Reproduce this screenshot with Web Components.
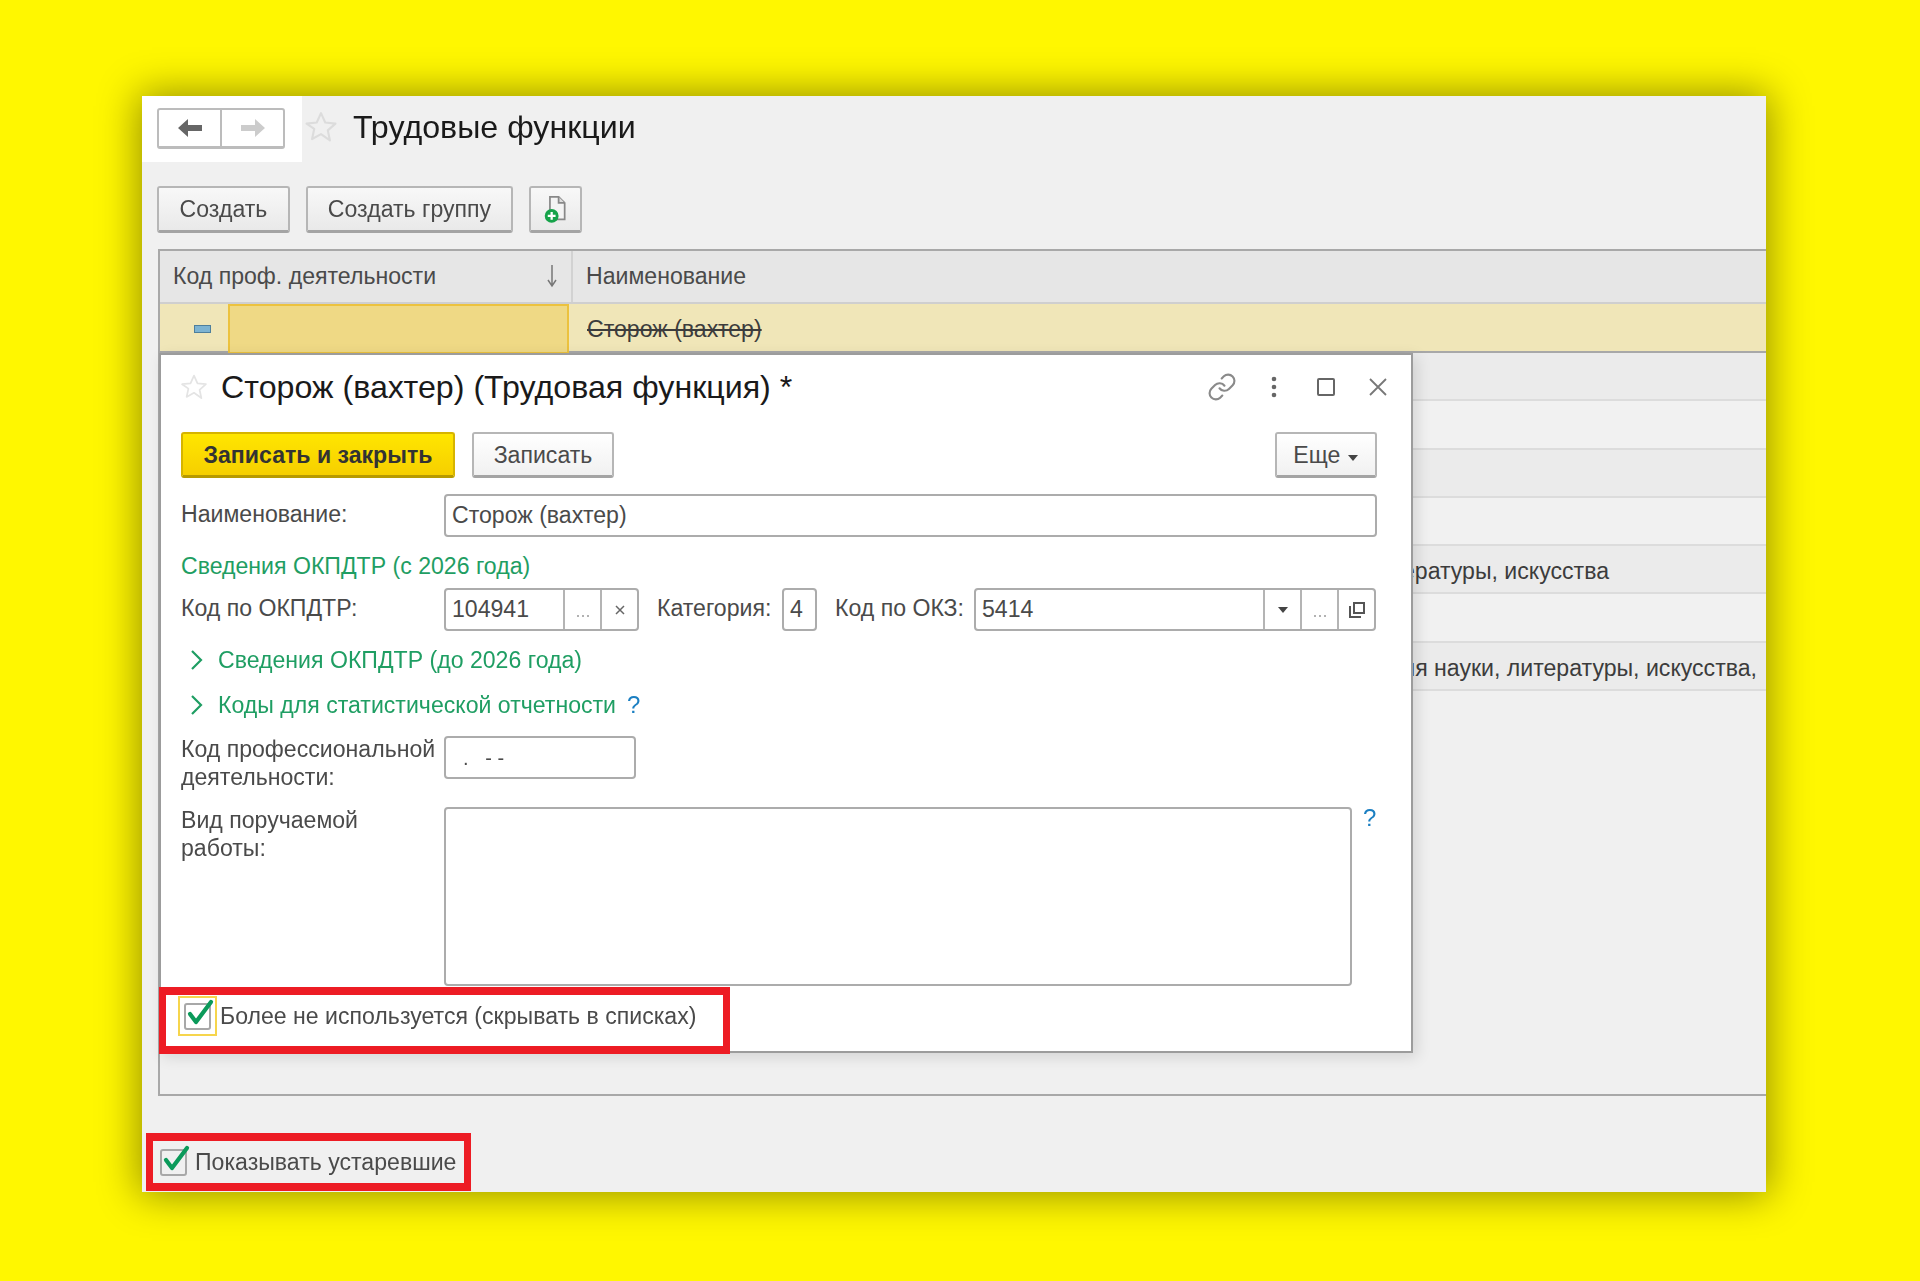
<!DOCTYPE html>
<html lang="ru">
<head>
<meta charset="utf-8">
<title>Трудовые функции</title>
<style>
    html, body { margin: 0; height: 1281px; overflow: hidden; }
    body {
        background: #fff700;
        padding: 96px 0 0 142px;
        box-sizing: border-box;
        font: 23.1px/26px "Liberation Sans", Arial, sans-serif;
        color: #4a4a4a;
    }
</style>
</head>
<body>
<hr-window>
    <hr-page-head slot="head">Трудовые функции</hr-page-head>
    <div slot="toolbar" style="display:flex;gap:16px">
        <hr-button style="width:133px">Создать</hr-button>
        <hr-button style="width:207px">Создать группу</hr-button>
        <hr-button style="width:53px" icon="doc"></hr-button>
    </div>
    <hr-table slot="table">
        <hr-grid-row>&nbsp;</hr-grid-row>
        <hr-grid-row light>&nbsp;</hr-grid-row>
        <hr-grid-row>&nbsp;</hr-grid-row>
        <hr-grid-row light>&nbsp;</hr-grid-row>
        <hr-grid-row end="157">Деятели науки, литературы, искусства</hr-grid-row>
        <hr-grid-row light>&nbsp;</hr-grid-row>
        <hr-grid-row end="9">Работники в сфере образования науки, литературы, искусства,</hr-grid-row>
    </hr-table>
    <hr-dialog slot="dialog" heading="Сторож (вахтер) (Трудовая функция) *">
        <hr-form></hr-form>
    </hr-dialog>
    <hr-check slot="footer" style="--box-gap:8px">Показывать устаревшие</hr-check>
</hr-window>

<script>
const STAR = (size, stroke) => `<svg width="${size}" height="${size}" viewBox="0 0 24 24" fill="none" stroke="${stroke}" stroke-width="1.5" stroke-linejoin="round"><path d="M12 2.2l3 6.6 7.2.8-5.4 4.8 1.5 7.1L12 17l-6.3 3.5 1.5-7.1L1.8 9.6 9 8.800z"/></svg>`;

const CHECK = `<svg width="34" height="34" viewBox="0 0 34 34" fill="none" stroke="#0b9a5a" stroke-width="4.200" stroke-linecap="round" stroke-linejoin="round"><path d="M6 17l6 8L27 5"/></svg>`;

class HrWindow extends HTMLElement {
    constructor() {
        super();
        this.attachShadow({ mode: 'open' });
        this.shadowRoot.innerHTML = `
            <style>
                :host {
                    display: flex;
                    flex-direction: column;
                    position: relative;
                    width: 1624px;
                    height: 1096px;
                    background: #f0f0f0;
                    box-shadow: 0 0 38px 3px rgba(0, 0, 0, 0.42);
                    filter: blur(0.45px);
                }
                .toolbar { margin: 24px 0 16px 15px; display: block; }
                .footer { margin: 37px 0 0 4px; display: block; }
            </style>
            <slot name="head"></slot>
            <div class="toolbar"><slot name="toolbar"></slot></div>
            <slot name="table"></slot>
            <div class="footer"><hr-mark><slot name="footer"></slot></hr-mark></div>
            <slot name="dialog"></slot>
        `;
    }
}

class HrPageHead extends HTMLElement {
    constructor() {
        super();
        this.attachShadow({ mode: 'open' });
        this.shadowRoot.innerHTML = `
            <style>
                :host { display: flex; align-items: flex-start; height: 66px; }
                .nav {
                    width: 160px;
                    height: 66px;
                    box-sizing: border-box;
                    padding: 12px 0 0 15px;
                    background: #fff;
                }
                .pair {
                    display: flex;
                    width: 128px;
                    height: 41px;
                    box-sizing: border-box;
                    border: 2px solid #bcbcbc;
                    border-bottom-width: 3px;
                    border-radius: 3px;
                }
                .pair div { flex: 1; display: flex; align-items: center; justify-content: center; }
                .pair div:first-child { border-right: 2px solid #bcbcbc; }
                .star { margin: 14px 0 0 2px; line-height: 0; }
                .title { margin: 12px 0 0 15px; font-size: 32.2px; line-height: 38px; color: #1a1a1a; }
            </style>
            <div class="nav">
                <div class="pair">
                    <div><svg width="26" height="20" viewBox="0 0 26 20" fill="#666"><path d="M1 10l10-9v6h14v6H11v6z"/></svg></div>
                    <div><svg width="26" height="20" viewBox="0 0 26 20" fill="#ccc"><path d="M25 10L15 1v6H1v6h14v6z"/></svg></div>
                </div>
            </div>
            <div class="star">${STAR(34, '#dcdcdc')}</div>
            <div class="title"><slot></slot></div>
        `;
    }
}

class HrButton extends HTMLElement {
    constructor() {
        super();
        this.attachShadow({ mode: 'open' });
        const icon = this.getAttribute('icon') === 'doc' ? `
            <svg width="26" height="30" viewBox="0 0 30 34">
                <path d="M8 3h10l7 7v19H8z" fill="#f4f4f4" stroke="#888" stroke-width="2"/>
                <path d="M18 3v7h7" fill="#ddd" stroke="#888" stroke-width="2"/>
                <circle cx="10" cy="25" r="8" fill="#16a34a"/>
                <path d="M10 20.500v9M5.500 25h9" stroke="#fff" stroke-width="2.600"/>
            </svg>` : '';
        this.shadowRoot.innerHTML = `
            <style>
                :host {
                    display: flex;
                    align-items: center;
                    justify-content: center;
                    height: 47px;
                    box-sizing: border-box;
                    border: 2px solid #b6b6b6;
                    border-bottom: 3px solid #a4a4a4;
                    border-radius: 3px;
                    background: linear-gradient(#f8f8f8, #e9e9e9);
                    color: #4a4a4a;
                }
                :host([primary]) {
                    background: linear-gradient(#ffe600, #f6cf00);
                    border-color: #d6b400;
                    border-bottom-color: #b79a00;
                    color: #333;
                    font-weight: bold;
                }
                :host([plain]) { background: linear-gradient(#ffffff, #f1f1f1); }
            </style>
            ${icon}<slot></slot>
        `;
    }
}

class HrTable extends HTMLElement {
    constructor() {
        super();
        this.attachShadow({ mode: 'open' });
        this.shadowRoot.innerHTML = `
            <style>
                :host {
                    display: block;
                    height: 847px;
                    margin-left: 16px;
                    box-sizing: border-box;
                    border: 2px solid #a8a8a8;
                    border-right: 0;
                    overflow: hidden;
                }
                .head {
                    display: grid;
                    grid-template-columns: 413px 1fr;
                    height: 53px;
                    background: #e6e6e6;
                    border-bottom: 2px solid #cfcfcf;
                    box-sizing: border-box;
                }
                .head div { display: flex; align-items: center; padding: 0 13px 2px; }
                .head div:first-child { justify-content: space-between; border-right: 2px solid #d2d2d2; padding: 0 12px 2px 13px; }
                .sel {
                    display: grid;
                    grid-template-columns: 68px 341px 1fr;
                    height: 49px;
                    background: #f0e6b8;
                    border-bottom: 2px solid #a8a8a8;
                    box-sizing: border-box;
                }
                .mark { display: flex; align-items: center; justify-content: flex-end; padding: 0 17px 0 0; }
                .mark i { display: block; width: 17px; height: 8px; box-sizing: border-box; background: #7db3d1; border: 1px solid #4e7f9c; }
                .cell { background: #efd985; border: 2px solid #ecc23e; box-sizing: border-box; }
                .text { padding: 0 0 0 18px; line-height: 50px; text-decoration: line-through; color: #3c3c3c; }
            </style>
            <div class="head">
                <div>Код проф. деятельности
                    <svg width="14" height="24" viewBox="0 0 14 24" fill="none" stroke="#777" stroke-width="1.500"><path d="M7 1v20M3 16l4 6 4-6"/></svg>
                </div>
                <div>Наименование</div>
            </div>
            <div class="sel">
                <div class="mark"><i></i></div>
                <div class="cell"></div>
                <div class="text">Сторож (вахтер)</div>
            </div>
            <slot></slot>
        `;
    }
}

class HrGridRow extends HTMLElement {
    constructor() {
        super();
        this.attachShadow({ mode: 'open' });
        const end = this.getAttribute('end') || 0;
        this.shadowRoot.innerHTML = `
            <style>
                :host {
                    display: block;
                    height: 48.3px;
                    box-sizing: border-box;
                    background: #ebebeb;
                    border-bottom: 2px solid #dcdcdc;
                    line-height: 50px;
                    white-space: nowrap;
                    text-align: right;
                    padding-right: ${end}px;
                    color: #3c3c3c;
                }
                :host([light]) { background: #f1f1f1; }
            </style>
            <slot></slot>
        `;
    }
}

class HrDialog extends HTMLElement {
    constructor() {
        super();
        this.attachShadow({ mode: 'open' });
        this.shadowRoot.innerHTML = `
            <style>
                :host {
                    position: absolute;
                    left: 17px;
                    top: 257px;
                    width: 1254px;
                    height: 700px;
                    box-sizing: border-box;
                    padding: 0 33px 0 20px;
                    background: #fff;
                    border: 2px solid #9c9c9c;
                    box-shadow: 4px 4px 14px rgba(0, 0, 0, 0.12);
                }
                .head { display: flex; align-items: center; height: 77px; box-sizing: border-box; padding-bottom: 14px; }
                .star { margin: 0 13px 0 -1px; line-height: 0; }
                h1 { margin: 0; flex: 1; font-size: 32.2px; line-height: 38px; font-weight: normal; color: #1a1a1a; }
                .icons { display: flex; align-items: center; margin: 0 -26px 0 0; }
                .icons span { display: flex; width: 52px; justify-content: center; }
            </style>
            <div class="head">
                <div class="star">${STAR(28, '#e4e4e4')}</div>
                <h1>${this.getAttribute('heading')}</h1>
                <div class="icons">
                    <span><svg width="30" height="30" viewBox="0 0 24 24" fill="none" stroke="#8a8a8a" stroke-width="1.700" stroke-linecap="round"><path d="M10 13a5 5 0 0 0 7.540.54l3-3a5 5 0 0 0-7.070-7.070l-1.720 1.710"/><path d="M14 11a5 5 0 0 0-7.540-.54l-3 3a5 5 0 0 0 7.070 7.070l1.710-1.710"/></svg></span>
                    <span><svg width="8" height="24" viewBox="0 0 8 24" fill="#666"><circle cx="4" cy="4" r="2.300"/><circle cx="4" cy="12" r="2.300"/><circle cx="4" cy="20" r="2.300"/></svg></span>
                    <span><svg width="20" height="20" viewBox="0 0 20 20" fill="none" stroke="#666" stroke-width="2"><rect x="2" y="2" width="16" height="16" rx="1"/></svg></span>
                    <span><svg width="20" height="20" viewBox="0 0 20 20" fill="none" stroke="#777" stroke-width="1.800"><path d="M2 2l16 16M18 2L2 18"/></svg></span>
                </div>
            </div>
            <slot></slot>
        `;
    }
}

class HrField extends HTMLElement {
    constructor() {
        super();
        this.attachShadow({ mode: 'open' });
        this.shadowRoot.innerHTML = `
            <style>
                :host {
                    display: flex;
                    height: 43px;
                    box-sizing: border-box;
                    border: 2px solid #acacac;
                    border-radius: 4px;
                    background: #fff;
                    overflow: hidden;
                    flex: none;
                }
                .value { flex: 1; padding: 0 5px 0 6px; line-height: 39px; white-space: pre; color: #4a4a4a; min-width: 0; }
                .btns { display: flex; }
            </style>
            <div class="value"><slot></slot></div>
            <div class="btns"><slot name="btn"></slot></div>
        `;
    }
}

class HrFieldBtn extends HTMLElement {
    constructor() {
        super();
        this.attachShadow({ mode: 'open' });
        const kinds = {
            more: '<svg width="16" height="20" viewBox="0 0 16 20" fill="#999"><circle cx="3" cy="16" r="1"/><circle cx="8" cy="16" r="1"/><circle cx="13" cy="16" r="1"/></svg>',
            clear: '<svg width="12" height="12" viewBox="0 0 12 12" fill="none" stroke="#666" stroke-width="1.500"><path d="M2 2l8 8M10 2l-8 8"/></svg>',
            down: '<svg width="12" height="8" viewBox="0 0 12 8" fill="#444"><path d="M1 1h10L6 7z"/></svg>',
            open: '<svg width="18" height="18" viewBox="0 0 18 18" fill="none" stroke="#555" stroke-width="2"><rect x="6" y="2" width="10" height="10"/><path d="M3 6H2v10h10v-1"/></svg>'
        };
        this.shadowRoot.innerHTML = `
            <style>
                :host {
                    display: flex;
                    align-items: center;
                    justify-content: center;
                    width: 35px;
                    border-left: 2px solid #b4b4b4;
                    box-sizing: content-box;
                }
            </style>
            ${kinds[this.getAttribute('kind')]}
        `;
    }
}

class HrMark extends HTMLElement {
    constructor() {
        super();
        this.attachShadow({ mode: 'open' });
        this.shadowRoot.innerHTML = `
            <style>
                :host {
                    display: inline-flex;
                    align-items: center;
                    box-sizing: border-box;
                    height: 58px;
                    padding: 0 8px 0 7px;
                    border: 8px solid #ed1c24;
                    border-width: 8px 7px;
                }
            </style>
            <slot></slot>
        `;
    }
}

class HrCheck extends HTMLElement {
    constructor() {
        super();
        this.attachShadow({ mode: 'open' });
        this.shadowRoot.innerHTML = `
            <style>
                :host { display: inline-flex; align-items: center; white-space: nowrap; }
                .focus { display: flex; align-items: center; justify-content: center; flex: none; }
                :host([focus]) .focus { width: 39px; height: 40px; box-sizing: border-box; border: 2px solid #f6d54c; }
                .box {
                    position: relative;
                    width: 27px;
                    height: 27px;
                    box-sizing: border-box;
                    border: 2px solid #a8a8a8;
                    border-radius: 3px;
                }
                :host([focus]) .box { margin-top: 2px; }
                svg { position: absolute; left: -2px; top: -8px; }
                .text { margin-left: var(--box-gap, 4px); }
            </style>
            <div class="focus"><div class="box">${CHECK}</div></div>
            <div class="text"><slot></slot></div>
        `;
    }
}

class HrForm extends HTMLElement {
    constructor() {
        super();
        this.attachShadow({ mode: 'open' });
        this.shadowRoot.innerHTML = `
            <style>
                :host { display: block; }
                .row { display: flex; align-items: flex-start; }
                .label { flex: none; width: 263px; }
                .green { color: #1f9e63; }
                .help { color: #1b7fc2; font-size: 24px; }
                .center { align-items: center; }
                .toolbar { height: 46px; justify-content: space-between; }
                .toolbar div { display: flex; gap: 17px; }
                .chev { margin-right: 15px; margin-left: 9px; line-height: 0; }
                hr-button { height: 46px; }
            </style>
            <div class="row toolbar">
                <div>
                    <hr-button primary style="width:274px">Записать и закрыть</hr-button>
                    <hr-button plain style="width:142px">Записать</hr-button>
                </div>
                <hr-button plain style="width:102px;margin-right:1px">Еще&nbsp;
                    <svg width="12" height="8" viewBox="0 0 12 8" fill="#444" style="margin-top:6px"><path d="M1 1h10L6 7z"/></svg>
                </hr-button>
            </div>

            <div class="row center" style="margin-top:16px">
                <div class="label" style="margin-top:-4px">Наименование:</div>
                <hr-field style="width:933px">Сторож (вахтер)</hr-field>
            </div>

            <div class="green" style="margin-top:16px">Сведения ОКПДТР (с 2026 года)</div>

            <div class="row center" style="margin-top:9px">
                <div class="label" style="margin-top:-4px">Код по ОКПДТР:</div>
                <hr-field style="width:195px">104941<hr-field-btn slot="btn" kind="more"></hr-field-btn><hr-field-btn slot="btn" kind="clear"></hr-field-btn></hr-field>
                <div style="margin:-4px 0 0 18px;width:125px">Категория:</div>
                <hr-field style="width:35px">4</hr-field>
                <div style="margin:-4px 0 0 18px;width:140px">Код по ОКЗ:</div>
                <hr-field style="width:402px;margin-left:-1px">5414<hr-field-btn slot="btn" kind="down"></hr-field-btn><hr-field-btn slot="btn" kind="more"></hr-field-btn><hr-field-btn slot="btn" kind="open"></hr-field-btn></hr-field>
            </div>

            <div class="row center green" style="margin-top:16px">
                <span class="chev"><svg width="13" height="22" viewBox="0 0 13 22" fill="none" stroke="#1f9e63" stroke-width="2.200"><path d="M2 2l9 9-9 9"/></svg></span>
                Сведения ОКПДТР (до 2026 года)
            </div>

            <div class="row center green" style="margin-top:19px">
                <span class="chev"><svg width="13" height="22" viewBox="0 0 13 22" fill="none" stroke="#1f9e63" stroke-width="2.200"><path d="M2 2l9 9-9 9"/></svg></span>
                Коды для статистической отчетности
                <span class="help" style="margin-left:11px">?</span>
            </div>

            <div class="row" style="margin-top:18px">
                <div class="label" style="margin-top:-1px;line-height:28px">Код профессиональной деятельности:</div>
                <hr-field style="width:192px"><span style="font-size:20px">  .   - -</span></hr-field>
            </div>

            <div class="row" style="margin-top:16px">
                <div class="label" style="margin-top:-1px;line-height:28px">Вид поручаемой<br>работы:</div>
                <hr-field style="width:908px;height:179px"></hr-field>
                <span class="help" style="margin:-2px 0 0 11px">?</span>
            </div>

            <div style="margin:1px 0 0 -22px;line-height:0">
                <hr-mark style="width:571px;height:67px;padding:0 0 10px 12px"><hr-check focus style="--box-gap:3px;line-height:26px">Более не используется (скрывать в списках)</hr-check></hr-mark>
            </div>
        `;
    }
}

customElements.define('hr-window', HrWindow);
customElements.define('hr-page-head', HrPageHead);
customElements.define('hr-button', HrButton);
customElements.define('hr-table', HrTable);
customElements.define('hr-grid-row', HrGridRow);
customElements.define('hr-dialog', HrDialog);
customElements.define('hr-field', HrField);
customElements.define('hr-field-btn', HrFieldBtn);
customElements.define('hr-mark', HrMark);
customElements.define('hr-check', HrCheck);
customElements.define('hr-form', HrForm);
</script>
</body>
</html>
